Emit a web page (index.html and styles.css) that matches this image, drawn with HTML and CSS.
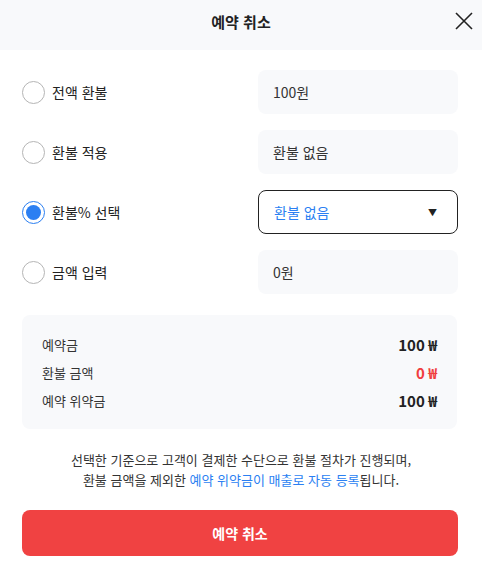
FILE: index.html
```html
<!DOCTYPE html>
<html lang="ko">
<head>
  <meta charset="UTF-8" />
  <meta name="viewport" content="width=device-width, initial-scale=1.0"/>
  <title>예약 취소</title>
  <link rel="stylesheet" href="styles.css">
</head>
<body>

  <div class="header">
    <span></span>
    <h1>예약 취소</h1>
    <button type="button" class="close-btn" aria-label="닫기">
      <svg width="18" height="18" viewBox="0 0 18 18">
        <path d="M1 1 L17 17 M17 1 L1 17" stroke="#222" stroke-width="1.6" fill="none" />
      </svg>
    </button>
  </div>

  <div class="options">
    <div class="option-row">
      <label class="radio"><span class="circle"></span>전액 환불</label>
      <div class="field">100원</div>
    </div>
    <div class="option-row">
      <label class="radio"><span class="circle"></span>환불 적용</label>
      <div class="field">환불 없음</div>
    </div>
    <div class="option-row">
      <label class="radio checked"><span class="circle"></span>환불% 선택</label>
      <div class="field select">
        <span>환불 없음</span>
        <span class="caret">▼</span>
      </div>
    </div>
    <div class="option-row">
      <label class="radio"><span class="circle"></span>금액 입력</label>
      <div class="field">0원</div>
    </div>
  </div>

  <div class="summary">
    <div class="summary-row">
      <span>예약금</span>
      <strong>100 ₩</strong>
    </div>
    <div class="summary-row">
      <span>환불 금액</span>
      <strong class="red">0 ₩</strong>
    </div>
    <div class="summary-row">
      <span>예약 위약금</span>
      <strong>100 ₩</strong>
    </div>
  </div>

  <p class="note">
    선택한 기준으로 고객이 결제한 수단으로 환불 절차가 진행되며,<br>
    환불 금액을 제외한 <span class="blue">예약 위약금이 매출로 자동 등록</span>됩니다.
  </p>

  <button type="button" class="submit-btn">예약 취소</button>

</body>
</html>
```

FILE: styles.css
```css
body {
  margin: 0;
  font-family: "Noto Sans CJK KR", "Noto Sans", sans-serif;
  color: #222;
  background: #fff;
}
.header {
  height: 50px;
  background: #f8f9fb;
  display: grid;
  grid-template-columns: 1fr auto 1fr;
  align-items: center;
  padding-bottom: 8px;
  box-sizing: border-box;
}
.header h1 {
  margin: 0;
  font-size: 15px;
  font-weight: 700;
  color: #222;
}
.close-btn {
  justify-self: end;
  margin-right: 9px;
  padding: 0;
  border: none;
  background: none;
  width: 18px;
  height: 18px;
  cursor: pointer;
}
.options {
  padding: 20px 24px 0 22px;
  display: flex;
  flex-direction: column;
  gap: 16px;
}
.option-row {
  display: flex;
  justify-content: space-between;
  align-items: center;
  height: 44px;
}
.radio {
  display: flex;
  align-items: center;
  gap: 7px;
  font-size: 14px;
  color: #222;
}
.circle {
  width: 21px;
  height: 21px;
  border: 1px solid #b5b5b5;
  border-radius: 50%;
  box-sizing: content-box;
  position: relative;
}
.radio.checked .circle {
  border-color: #2b7ff2;
}
.radio.checked .circle::after {
  content: "";
  position: absolute;
  top: 3px; left: 3px;
  width: 15px;
  height: 15px;
  border-radius: 50%;
  background: #2b7ff2;
}
.field {
  width: 200px;
  height: 44px;
  box-sizing: border-box;
  background: #f8f9fb;
  border-radius: 8px;
  padding: 0 15px;
  display: flex;
  align-items: center;
  font-size: 14px;
  color: #333;
}
.field.select {
  background: #fff;
  border: 1px solid #222;
  justify-content: space-between;
  color: #2b7ff2;
  padding-right: 20px;
}
.caret {
  font-size: 9px;
  color: #222;
}
.summary {
  margin: 21px 25px 0 22px;
  background: #f8f9fb;
  border-radius: 8px;
  padding: 15px 20px 15px;
}
.summary-row {
  display: flex;
  justify-content: space-between;
  align-items: center;
  height: 28px;
  font-size: 13px;
  color: #333;
}
.summary-row strong {
  font-size: 15px;
  color: #222;
}
.summary-row strong.red {
  color: #f03e3e;
}
.note {
  margin: 21px 0 0;
  text-align: center;
  font-size: 13px;
  line-height: 20px;
  color: #333;
}
.blue {
  color: #2b7ff2;
}
.submit-btn {
  display: block;
  width: calc(100% - 46px);
  margin: 20px 24px 0 22px;
  height: 46px;
  border: none;
  border-radius: 8px;
  background: #f04242;
  color: #fff;
  font-family: inherit;
  font-size: 14px;
  font-weight: 700;
  cursor: pointer;
}
```
